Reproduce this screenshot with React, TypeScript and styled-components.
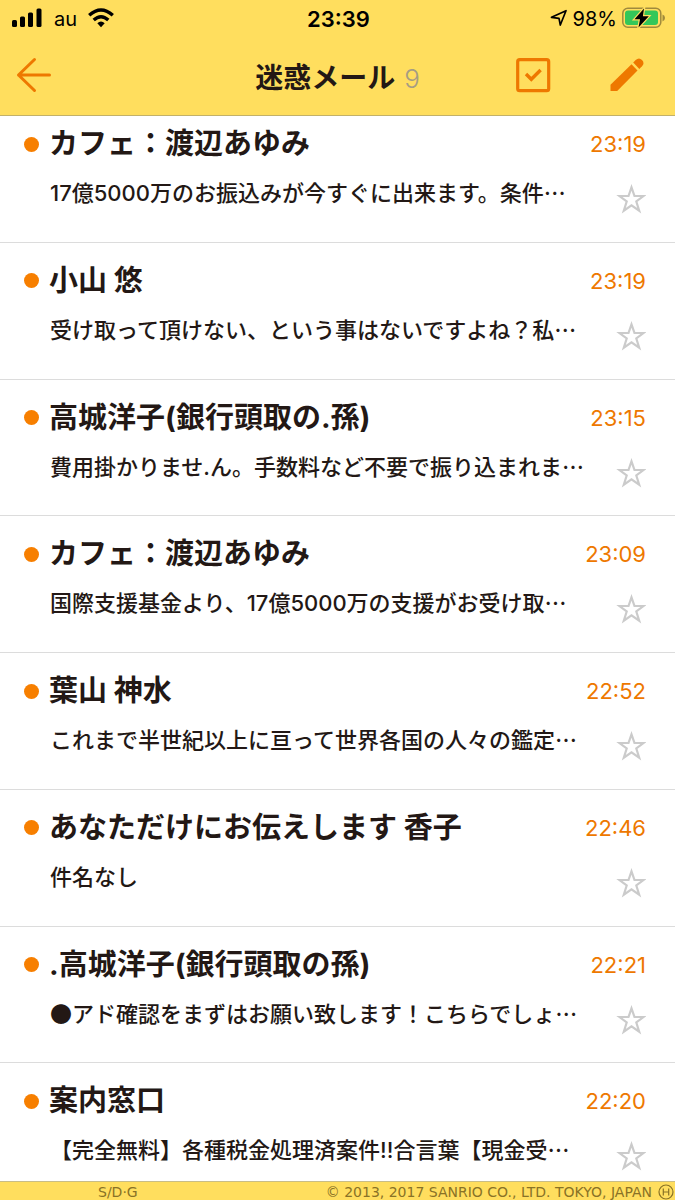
import React, { useState } from "react";
import styled, { createGlobalStyle } from "styled-components";

const FONT = `Inter, "Noto Sans CJK JP", sans-serif`;
const YELLOW = "#ffde5e";
const ORANGE = "#ee7800";

const GlobalStyle = createGlobalStyle`
  * { box-sizing: border-box; }
  body { margin: 0; background: #fff; color: #231815; font-family: ${FONT}; }
  button { padding: 0; border: 0; background: none; cursor: pointer; }
  svg { display: block; }
`;

const Page = styled.div`
  display: flex;
  flex-direction: column;
  min-height: 100vh;
`;

const Header = styled.header`
  position: sticky;
  top: 0;
  z-index: 1;
  padding-bottom: 3px;
  background: ${YELLOW};
  border-bottom: 1px solid #c2b16a;
`;

const StatusBar = styled.div`
  display: grid;
  grid-template-columns: 1fr auto 1fr;
  align-items: center;
  height: 38px;
  padding: 0 10px 2px 12px;
  color: #000;
  font-size: 20px;
  line-height: 24px;
`;

const StatusGroup = styled.div<{ $end?: boolean }>`
  display: flex;
  align-items: center;
  justify-content: ${(p) => (p.$end ? "flex-end" : "flex-start")};
  gap: ${(p) => (p.$end ? "5px" : "11px")};
`;

const StatusText = styled.span`
  padding-top: 2px;
`;

const Clock = styled.time`
  padding-top: 2px;
  font-size: 22px;
  font-weight: 600;
`;

const NavBar = styled.div`
  display: grid;
  grid-template-columns: 1fr auto 1fr;
  align-items: center;
  height: 74px;
  padding: 0 15px;
`;

const Title = styled.h1`
  display: flex;
  align-items: baseline;
  gap: 9px;
  margin: 0;
  padding-top: 7px;
  font-size: 28px;
  line-height: 40px;
  font-weight: 700;
`;

const Count = styled.span`
  color: #a59c84;
  font-size: 26px;
  font-weight: 300;
`;

const IconButton = styled.button`
  width: 36px;
  height: 36px;
  color: ${ORANGE};
`;

const Actions = styled.div`
  display: flex;
  justify-content: flex-end;
  gap: 58px;
  padding-right: 15px;
`;

const MailList = styled.ul`
  flex: 1;
  display: grid;
  grid-auto-rows: 1fr;
  margin: -10px 0 0;
  padding: 0;
  list-style: none;
`;

const MailRow = styled.li`
  padding: 18px 29px 20px 24px;
  border-bottom: 1px solid #dcdcdc;
`;

const RowTop = styled.div`
  display: flex;
  align-items: center;
  height: 40px;
`;

const RowBottom = styled.div`
  display: flex;
  align-items: flex-start;
  justify-content: space-between;
  margin-top: 13px;
  padding-left: 26px;
`;

const UnreadDot = styled.span`
  flex: none;
  width: 15px;
  height: 15px;
  margin-right: 10px;
  border-radius: 50%;
  background: #f77f00;
`;

const Sender = styled.h2`
  flex: 1;
  margin: 0;
  font-size: 29px;
  line-height: 40px;
  font-weight: 700;
  white-space: nowrap;
`;

const Received = styled.time`
  color: ${ORANGE};
  font-size: 22px;
  line-height: 28px;
`;

const Subject = styled.a`
  color: inherit;
  font-size: 22px;
  line-height: 32px;
  font-weight: 500;
  text-decoration: none;
  white-space: nowrap;
`;

const Cjk = styled.span`
  font-family: "Noto Sans CJK JP", sans-serif;
  line-height: 0;
`;

const StarButton = styled.button`
  flex: none;
  width: 30px;
  height: 30px;
  margin-top: 7px;
`;

const Footer = styled.footer`
  position: fixed;
  right: 0;
  bottom: 0;
  left: 0;
  display: flex;
  align-items: center;
  justify-content: space-between;
  height: 19px;
  padding: 2px 1px 0 98px;
  border-top: 1px solid #c9bd86;
  background: ${YELLOW};
  color: #897226;
  font-family: "DejaVu Sans", sans-serif;
  font-size: 14px;
  line-height: 16px;
`;

const Copyright = styled.span`
  display: flex;
  align-items: center;
  gap: 6px;
`;

const mails = [
  { sender: "カフェ：渡辺あゆみ", time: "23:19", subject: "17億5000万のお振込みが今すぐに出来ます。条件", more: true },
  { sender: "小山 悠", time: "23:19", subject: "受け取って頂けない、という事はないですよね？私", more: true },
  { sender: "高城洋子(銀行頭取の.孫)", time: "23:15", subject: "費用掛かりませ.ん。手数料など不要で振り込まれま", more: true },
  { sender: "カフェ：渡辺あゆみ", time: "23:09", subject: "国際支援基金より、17億5000万の支援がお受け取", more: true },
  { sender: "葉山 神水", time: "22:52", subject: "これまで半世紀以上に亘って世界各国の人々の鑑定", more: true },
  { sender: "あなただけにお伝えします 香子", time: "22:46", subject: "件名なし", more: false },
  { sender: ".高城洋子(銀行頭取の孫)", time: "22:21", mark: "●", subject: "アド確認をまずはお願い致します！こちらでしょ", more: true },
  { sender: "案内窓口", time: "22:20", subject: "【完全無料】各種税金処理済案件!!合言葉【現金受", more: true },
];

const SignalIcon = () => (
  <svg width="31" height="20" viewBox="0 0 31 20" aria-hidden="true">
    <rect x="0" y="12" width="5" height="7" rx="1.5" />
    <rect x="8" y="8.5" width="5" height="10.5" rx="1.5" />
    <rect x="16" y="4.5" width="5" height="14.5" rx="1.5" />
    <rect x="24.5" y="0.5" width="5" height="18.5" rx="1.5" />
  </svg>
);

const WifiIcon = () => (
  <svg width="26" height="20" viewBox="0 0 26 20" aria-hidden="true">
    <g fill="none" stroke="#000" strokeWidth="3.4">
      <path d="M1.2 7.3Q13-3.300 24.8 7.3" />
      <path d="M5.7 12Q13 5.4 20.3 12" />
    </g>
    <path d="M9.3 15.2Q13 12 16.7 15.2L13 19.2Z" />
  </svg>
);

const LocationIcon = () => (
  <svg width="18" height="18" viewBox="0 0 18 18" aria-hidden="true">
    <path d="M1.5 8.3L16 1.7L10.3 16L9 9.3Z" fill="none" stroke="#000" strokeWidth="1.7" strokeLinejoin="round" />
  </svg>
);

const BatteryIcon = () => (
  <svg width="43" height="22" viewBox="0 0 43 22" aria-hidden="true">
    <rect x="0.8" y="1.3" width="38" height="19" rx="5" fill="none" stroke="#a08a3c" strokeWidth="1.5" />
    <path d="M40.5 7.5Q43 8.3 43 11T40.5 14.5Z" fill="#a08a3c" />
    <rect x="3" y="3.5" width="33" height="14.6" rx="3" fill="#34c759" />
    <path d="M22 1.5L12.5 12.3H18L16.5 20.5L26.8 9.2H20.9Z" fill="#000" stroke={YELLOW} strokeWidth="2.4" paintOrder="stroke" />
  </svg>
);

const BackIcon = () => (
  <svg width="36" height="36" viewBox="0 0 36 36" aria-hidden="true">
    <path d="M19.5 2.500L3.5 18L19.5 33.5M3.5 18H34.5" fill="none" stroke="currentColor" strokeWidth="3" strokeLinecap="round" strokeLinejoin="round" />
  </svg>
);

const SelectIcon = () => (
  <svg width="36" height="36" viewBox="0 0 36 36" fill="none" stroke="currentColor" aria-hidden="true">
    <rect x="2.7" y="2.7" width="31" height="31" rx="2" strokeWidth="3.2" />
    <path d="M11 17L16.3 22.3L25.6 13" strokeWidth="3.4" />
  </svg>
);

const ComposeIcon = () => (
  <svg width="36" height="36" viewBox="0 0 36 36" fill="currentColor" aria-hidden="true">
    <path d="M1.5 27.7L22.5 7.3L28.5 13.5L8.2 34H1.5Z" />
    <path d="M24.2 5.6L26.7 3Q30 0 33 3Q36 6.2 33 9.3L30.3 11.9Z" />
  </svg>
);

const StarIcon = ({ filled }: { filled: boolean }) => (
  <svg width="30" height="30" viewBox="0 0 30 30" aria-hidden="true">
    <path
      d="M15.5 3.3L18.5 12H27.5L20.3 17.5L23.2 26.7L15.5 21.3L7.8 26.7L10.7 17.5L3.5 12H12.5Z"
      fill={filled ? ORANGE : "none"}
      stroke={filled ? ORANGE : "#cbcbcb"}
      strokeWidth="2.2"
    />
  </svg>
);

const CircledH = () => (
  <svg width="16" height="16" viewBox="0 0 16 16" fill="none" stroke="currentColor" strokeWidth="1.2" aria-hidden="true">
    <circle cx="8" cy="8" r="7" />
    <path d="M5.3 4.5V11.5M10.7 4.5V11.5M5.3 8H10.7" />
  </svg>
);

export default function App() {
  const [starred, setStarred] = useState<number[]>([]);
  const toggle = (i: number) =>
    setStarred((s) => (s.includes(i) ? s.filter((n) => n !== i) : [...s, i]));

  return (
    <Page lang="ja">
      <GlobalStyle />
      <Header>
        <StatusBar>
          <StatusGroup>
            <SignalIcon />
            <StatusText>au</StatusText>
            <WifiIcon />
          </StatusGroup>
          <Clock>23:39</Clock>
          <StatusGroup $end>
            <LocationIcon />
            <StatusText>98%</StatusText>
            <BatteryIcon />
          </StatusGroup>
        </StatusBar>
        <NavBar>
          <IconButton aria-label="戻る"><BackIcon /></IconButton>
          <Title>迷惑メール <Count>9</Count></Title>
          <Actions>
            <IconButton aria-label="選択"><SelectIcon /></IconButton>
            <IconButton aria-label="作成"><ComposeIcon /></IconButton>
          </Actions>
        </NavBar>
      </Header>
      <MailList>
        {mails.map((m, i) => (
          <MailRow key={i}>
            <RowTop>
              <UnreadDot />
              <Sender>{m.sender}</Sender>
              <Received>{m.time}</Received>
            </RowTop>
            <RowBottom>
              <Subject href="#">
                {m.mark && <Cjk>{m.mark}</Cjk>}
                {m.subject}
                {m.more && <Cjk>…</Cjk>}
              </Subject>
              <StarButton aria-label="スター" aria-pressed={starred.includes(i)} onClick={() => toggle(i)}>
                <StarIcon filled={starred.includes(i)} />
              </StarButton>
            </RowBottom>
          </MailRow>
        ))}
      </MailList>
      <Footer>
        <span>S/D·G</span>
        <Copyright>© 2013, 2017 SANRIO CO., LTD. TOKYO, JAPAN <CircledH /></Copyright>
      </Footer>
    </Page>
  );
}
